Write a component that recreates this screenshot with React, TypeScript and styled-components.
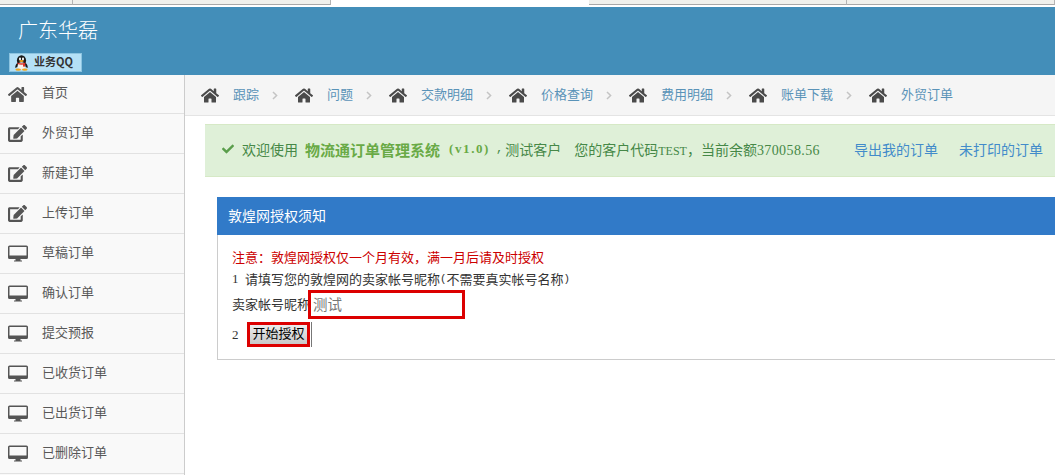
import React from 'react';
import styled, { createGlobalStyle } from 'styled-components';
import { FaCheck, FaEdit, FaHome } from 'react-icons/fa';

const CJK = '"Noto Sans CJK SC", "Noto Sans", sans-serif';
const MONO = '"Liberation Mono", "Noto Sans CJK SC", monospace';
const SERIF = '"Liberation Serif", "Noto Sans CJK SC", serif';

const GlobalStyle = createGlobalStyle`
  html, body {
    margin: 0;
    padding: 0;
    height: 475px;
    overflow: hidden;
    background: #fff;
    font-family: ${CJK};
  }
  * { box-sizing: border-box; }
`;

const Page = styled.div`
  width: 1055px;
  height: 475px;
  overflow: hidden;
  display: flex;
  flex-direction: column;
`;

const TabStrip = styled.div`
  height: 7px;
  flex: none;
  display: flex;
  background: #fff;
`;

const Tab = styled.div<{ $width: number; $blank?: boolean }>`
  width: ${(p) => p.$width}px;
  height: 5px;
  flex: none;
  background: ${(p) => (p.$blank ? '#fff' : '#f0f0ec')};
  border-bottom: ${(p) => (p.$blank ? 'none' : '1px solid #a8a8a8')};
  border-right: ${(p) => (p.$blank ? 'none' : '1px solid #b4b4b4')};
`;

const Header = styled.header`
  height: 68px;
  flex: none;
  background: #438eb9;
  display: flex;
  flex-direction: column;
  padding: 10px 0 3px 9px;
`;

const Title = styled.div`
  font-size: 20px;
  line-height: 26px;
  color: #fff;
  font-weight: 300;
  margin-left: 9px;
`;

const QQButton = styled.div`
  margin-top: auto;
  width: 73px;
  height: 19px;
  background: #b4e0f6;
  border: 1px solid #8cc4e0;
  display: flex;
  align-items: center;
  padding-left: 4px;
  gap: 5px;
  font-size: 11px;
  font-weight: 700;
  line-height: 15px;
  color: #333;
`;

const QQLabel = styled.span`
  padding-bottom: 2px;
`;

const Body = styled.div`
  flex: 1;
  display: flex;
  min-height: 0;
`;

const Sidebar = styled.nav`
  width: 185px;
  flex: none;
  background: #f9f9f9;
  border-right: 1px solid #ccc;
`;

const MenuRow = styled.div<{ $first?: boolean }>`
  height: ${(p) => (p.$first ? 39 : 40)}px;
  border-bottom: 1px solid #e2e2e2;
  display: flex;
  align-items: center;
  font-size: 13px;
  color: #585858;
`;

const MenuIcon = styled.span`
  width: 42px;
  flex: none;
  display: flex;
  padding-left: 8px;
  color: #555;
`;

const MenuLabel = styled.span<{ $first?: boolean }>`
  padding-bottom: ${(p) => (p.$first ? 6 : 4)}px;
`;

const Main = styled.main`
  flex: 1;
  min-width: 0;
  overflow: hidden;
`;

const Breadcrumbs = styled.div`
  height: 41px;
  background: #f5f5f5;
  border-bottom: 1px solid #e4e4e4;
  display: flex;
  align-items: center;
  padding-left: 16px;
`;

const Crumb = styled.span`
  display: flex;
  align-items: center;
  font-size: 13px;
  color: #5a93b8;
  white-space: nowrap;
`;

const CrumbIcon = styled.span`
  width: 18px;
  margin-right: 14px;
  display: flex;
  color: #4a4a4a;
`;

const CrumbLabel = styled.span`
  padding-bottom: 3px;
`;

const CrumbSep = styled.span`
  width: 36px;
  display: flex;
  justify-content: center;
  padding-right: 4px;
`;

const Alert = styled.div`
  margin: 8px 0 0 20px;
  width: 870px;
  height: 53px;
  background: #dff0d8;
  border-top: 1px solid #d6e9c6;
  border-bottom: 1px solid #d6e9c6;
  display: flex;
  align-items: center;
  padding: 0 0 3px 17px;
  font-size: 14px;
  color: #468847;
  white-space: nowrap;
`;

const AlertCheck = styled.span`
  width: 20px;
  flex: none;
  display: flex;
  color: #5a9e4b;
`;

const Brand = styled.strong`
  font-size: 15px;
  font-weight: 700;
  color: #69aa46;
  margin-left: 7px;
`;

const Version = styled.span`
  font-family: "Liberation Serif", serif;
  font-size: 13px;
  font-weight: 700;
  letter-spacing: 1.6px;
  color: #69aa46;
  margin: 0 6px 0 9px;
`;

const Latin = styled.span<{ $size: number }>`
  font-family: ${MONO};
  font-size: ${(p) => p.$size}px;
`;

const GreetComma = styled.span`
  font-family: ${MONO};
  font-size: 12px;
  margin-right: 2px;
`;

const Digits = styled.span<{ $size: number; $spacing?: number }>`
  font-family: ${SERIF};
  font-size: ${(p) => p.$size}px;
  letter-spacing: ${(p) => p.$spacing ?? 0}px;
`;

const Customer = styled.span`
  margin-left: 13px;
`;

const AlertLink = styled.a<{ $gap: number }>`
  color: #428bca;
  margin-left: ${(p) => p.$gap}px;
`;

const Panel = styled.section`
  margin: 20px 0 0 32px;
  width: 900px;
  height: 163px;
  border-left: 1px solid #ccc;
  border-bottom: 1px solid #ccc;
`;

const PanelHeading = styled.div`
  height: 38px;
  margin-left: -1px;
  background: #317ac8;
  color: #fff;
  font-size: 14px;
  display: flex;
  align-items: center;
  padding: 0 0 2px 11px;
`;

const PanelBody = styled.div`
  padding: 12px 0 0 14px;
  font-size: 13px;
  color: #333;
`;

const Notice = styled.div`
  color: #c00;
  line-height: 20px;
`;

const Line = styled.div`
  line-height: 22px;
  display: flex;
  align-items: center;
`;

const StepNumber = styled.span`
  width: 13px;
  flex: none;
`;

const ActionStep = styled(StepNumber)`
  padding-bottom: 3px;
`;

const FormRow = styled.div`
  display: flex;
  align-items: center;
  height: 29px;
`;

const FieldLabel = styled.span`
  width: 76px;
  flex: none;
  white-space: nowrap;
  padding-bottom: 2px;
`;

const FieldBox = styled.div`
  width: 157px;
  height: 29px;
  border: 3px solid #dc0000;
  background: #fff;
  padding-left: 2px;
  font-size: 14.5px;
  line-height: 21px;
  color: #777;
`;

const ActionRow = styled.div`
  display: flex;
  align-items: center;
  margin-top: 3px;
  height: 25px;
`;

const StartButton = styled.button`
  width: 65px;
  height: 25px;
  margin-left: 2px;
  padding: 0;
  border: none;
  border-right: 1px solid #777;
  background: transparent;
  display: flex;
  font-family: inherit;
`;

const StartButtonFace = styled.span`
  width: 63px;
  height: 25px;
  border: 3px solid #dc0000;
  background: linear-gradient(#ececec, #c9c9c9);
  color: #000;
  font-size: 13px;
  line-height: 15px;
  text-align: center;
  white-space: nowrap;
`;

const Penguin = () => (
  <svg width="15" height="16" viewBox="0 0 15 16">
    <ellipse cx="7.5" cy="5.5" rx="4.6" ry="5.3" fill="#1a1a1a" />
    <path d="M3.2 8 C1.2 10 1 12.5 1.6 13 C2.4 12.8 3 12 3.2 11.5 L11.8 11.5 C12 12 12.6 12.8 13.4 13 C14 12.5 13.8 10 11.8 8 Z" fill="#1a1a1a" />
    <ellipse cx="7.5" cy="10.8" rx="3.8" ry="3.6" fill="#f7f3ea" />
    <path d="M3.6 7.4 C6 8.6 9 8.6 11.4 7.4 L11.6 9 C9 10 6 10 3.4 9 Z" fill="#d9352a" />
    <rect x="9" y="8.6" width="2" height="3" fill="#d9352a" />
    <ellipse cx="6" cy="4" rx="1" ry="1.4" fill="#fff" />
    <ellipse cx="9" cy="4" rx="1" ry="1.4" fill="#fff" />
    <ellipse cx="7.5" cy="6" rx="2.2" ry="1" fill="#f2a81d" />
    <ellipse cx="4.2" cy="14.6" rx="2.8" ry="1.2" fill="#f2a81d" />
    <ellipse cx="10.8" cy="14.6" rx="2.8" ry="1.2" fill="#f2a81d" />
  </svg>
);

const DesktopIcon = () => (
  <svg width="20" height="17" viewBox="0 0 20 17" fill="#555">
    <path d="M1.5 0.5 H18.5 A1.5 1.5 0 0 1 20 2 V12.5 A1.5 1.5 0 0 1 18.5 14 H1.5 A1.5 1.5 0 0 1 0 12.5 V2 A1.5 1.5 0 0 1 1.5 0.5 Z M1.5 2 V10.5 H18.5 V2 Z" fillRule="evenodd" />
    <path d="M7.5 14 H12.5 V15.5 H14 V16.5 H6 V15.5 H7.5 Z" />
  </svg>
);

const Chevron = () => (
  <svg width="6" height="9" viewBox="0 0 6 9" fill="none" stroke="#c4c4c4" strokeWidth="1.5">
    <path d="M1 1 L4.6 4.5 L1 8" />
  </svg>
);

const menu = [
  { label: '首页', icon: 'home' },
  { label: '外贸订单', icon: 'edit' },
  { label: '新建订单', icon: 'edit' },
  { label: '上传订单', icon: 'edit' },
  { label: '草稿订单', icon: 'desktop' },
  { label: '确认订单', icon: 'desktop' },
  { label: '提交预报', icon: 'desktop' },
  { label: '已收货订单', icon: 'desktop' },
  { label: '已出货订单', icon: 'desktop' },
  { label: '已删除订单', icon: 'desktop' },
];

const crumbs = ['跟踪', '问题', '交款明细', '价格查询', '费用明细', '账单下载', '外贸订单'];

const App: React.FC = () => (
  <Page>
    <GlobalStyle />
    <TabStrip>
      <Tab $width={73} />
      <Tab $width={258} />
      <Tab $width={258} $blank />
      <Tab $width={258} />
      <Tab $width={208} />
    </TabStrip>
    <Header>
      <Title>广东华磊</Title>
      <QQButton>
        <Penguin />
        <QQLabel>业务QQ</QQLabel>
      </QQButton>
    </Header>
    <Body>
      <Sidebar>
        {menu.map((item, i) => (
          <MenuRow key={item.label} $first={i === 0}>
            <MenuIcon>
              {item.icon === 'home' && <FaHome size={19} />}
              {item.icon === 'edit' && <FaEdit size={19} />}
              {item.icon === 'desktop' && <DesktopIcon />}
            </MenuIcon>
            <MenuLabel $first={i === 0}>{item.label}</MenuLabel>
          </MenuRow>
        ))}
      </Sidebar>
      <Main>
        <Breadcrumbs>
          {crumbs.map((label, i) => (
            <React.Fragment key={label}>
              <Crumb>
                <CrumbIcon><FaHome size={19} /></CrumbIcon>
                <CrumbLabel>{label}</CrumbLabel>
              </Crumb>
              {i < crumbs.length - 1 && <CrumbSep><Chevron /></CrumbSep>}
            </React.Fragment>
          ))}
        </Breadcrumbs>
        <Alert>
          <AlertCheck><FaCheck size={12} /></AlertCheck>
          欢迎使用
          <Brand>物流通订单管理系统</Brand>
          <Version>(v1.0)</Version>
          <GreetComma>,</GreetComma>测试客户
          <Customer>
            您的客户代码<Digits $size={12}>TEST</Digits>{'\uFF0C'}当前余额<Digits $size={14} $spacing={0.4}>370058.56</Digits>
          </Customer>
          <AlertLink $gap={34}>导出我的订单</AlertLink>
          <AlertLink $gap={21}>未打印的订单</AlertLink>
        </Alert>
        <Panel>
          <PanelHeading>敦煌网授权须知</PanelHeading>
          <PanelBody>
            <Notice>{'注意\uFF1A敦煌网授权仅一个月有效\uFF0C满一月后请及时授权'}</Notice>
            <Line>
              <StepNumber><Digits $size={13}>1</Digits></StepNumber>
              请填写您的敦煌网的卖家帐号昵称
              <Latin $size={10.8}>(</Latin>不需要真实帐号名称<Latin $size={10.8}>)</Latin>
            </Line>
            <FormRow>
              <FieldLabel>卖家帐号昵称</FieldLabel>
              <FieldBox>测试</FieldBox>
            </FormRow>
            <ActionRow>
              <ActionStep><Digits $size={13}>2</Digits></ActionStep>
              <StartButton type="button">
                <StartButtonFace>开始授权</StartButtonFace>
              </StartButton>
            </ActionRow>
          </PanelBody>
        </Panel>
      </Main>
    </Body>
  </Page>
);

export default App;
